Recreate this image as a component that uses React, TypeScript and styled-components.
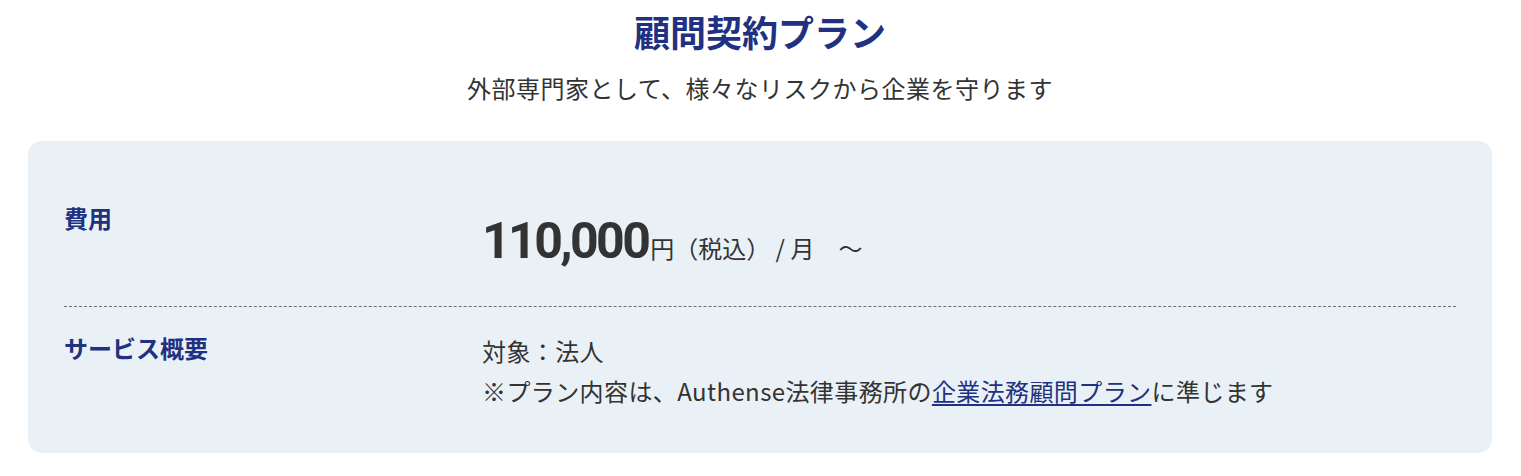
import React from "react";
import styled, { createGlobalStyle } from "styled-components";

const Global = createGlobalStyle`
  html, body { margin: 0; padding: 0; background: #fff; }
  body { font-family: "Noto Sans CJK JP", "Noto Sans", sans-serif; color: #333; }
`;

const Page = styled.div`
  padding: 5px 29px 0 28px;
`;

const Header = styled.header`
  display: flex;
  flex-direction: column;
  align-items: center;
`;

const Title = styled.h2`
  margin: 0;
  font-size: 36px;
  line-height: 52px;
  font-weight: 700;
  color: #213182;
`;

const Lead = styled.p`
  margin: 13px 0 0;
  font-size: 24px;
  line-height: 36px;
  letter-spacing: 0.5px;
  color: #333;
`;

const Card = styled.section`
  margin-top: 35px;
  background: #eaf1f6;
  border-radius: 14px;
  padding: 0 36px;
`;

const Row = styled.div<{ $divider?: boolean; $pad: string }>`
  display: grid;
  grid-template-columns: 418px 1fr;
  align-items: start;
  padding: ${(p) => p.$pad};
  border-bottom: ${(p) => (p.$divider ? "1px dashed #6b7078" : "none")};
`;

const Label = styled.div`
  font-size: 24px;
  line-height: 34px;
  font-weight: 700;
  color: #213182;
`;

const Value = styled.div`
  font-size: 24px;
  line-height: 40px;
  letter-spacing: 0.4px;
  color: #333;
`;

const Price = styled.div`
  margin-top: 10px;
  display: flex;
  align-items: baseline;
  font-size: 24px;
  color: #333;
`;

const Amount = styled.span`
  font-family: Roboto, "Noto Sans", sans-serif;
  font-size: 50px;
  font-weight: 700;
  letter-spacing: -2.6px;
  line-height: 60px;
  margin-right: 2px;
  color: #333;
`;

const Link = styled.a`
  color: #213182;
  text-decoration: underline;
  text-underline-offset: 3px;
`;

export default function App() {
  return (
    <>
      <Global />
      <Page>
        <Header>
          <Title>顧問契約プラン</Title>
          <Lead>外部専門家として、様々なリスクから企業を守ります</Lead>
        </Header>
        <Card>
          <Row $divider $pad="60px 0 35px">
            <Label>費用</Label>
            <Price>
              <Amount>110,000</Amount>
              <span>円（税込） / 月　～</span>
            </Price>
          </Row>
          <Row $pad="24px 0 42px">
            <Label>サービス概要</Label>
            <Value>
              <div>対象：法人</div>
              <div>
                ※プラン内容は、Authense法律事務所の
                <Link href="#">企業法務顧問プラン</Link>に準じます
              </div>
            </Value>
          </Row>
        </Card>
      </Page>
    </>
  );
}
